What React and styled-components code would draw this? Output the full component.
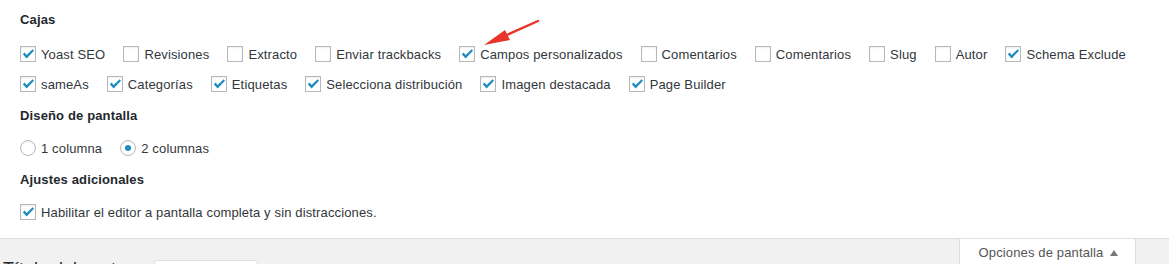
import React from "react";
import styled, { createGlobalStyle } from "styled-components";

const GlobalStyle = createGlobalStyle`
  html, body {
    margin: 0;
    padding: 0;
    background: #f1f1f1;
    overflow: hidden;
  }
  body {
    font-family: "Liberation Sans", Arial, sans-serif;
    font-size: 13px;
    letter-spacing: 0.14px;
    color: #32373c;
  }
`;

const Panel = styled.div`
  position: relative;
  background: #fff;
  padding: 8px 20px 11px;
  border-bottom: 1px solid #ddd;
`;

const Heading = styled.h5`
  margin: ${({ $first }) => ($first ? "0" : "5px 0 0")};
  font-size: 13px;
  font-weight: 700;
  line-height: 24px;
  color: #23282d;
`;

const Options = styled.div`
  display: flex;
  flex-wrap: wrap;
  column-gap: 18px;
  margin-top: ${({ $gap }) => $gap}px;
`;

const Option = styled.label`
  display: inline-flex;
  align-items: center;
  gap: 5px;
  height: 30px;
  white-space: nowrap;
  cursor: pointer;
`;

const Box = styled.span`
  box-sizing: border-box;
  flex: none;
  width: 16px;
  height: 16px;
  border: 1px solid #b4b9be;
  background: #fff;
  box-shadow: inset 0 1px 2px rgba(0, 0, 0, 0.07);
  display: flex;
  align-items: center;
  justify-content: center;
  border-radius: ${({ $round }) => ($round ? "50%" : "0")};
`;

const Dot = styled.span`
  width: 6px;
  height: 6px;
  border-radius: 50%;
  background: #1e8cbe;
`;

const Arrow = styled.svg`
  position: absolute;
  left: 0;
  top: 0;
  pointer-events: none;
`;

const Bar = styled.div`
  display: flex;
  justify-content: space-between;
  align-items: flex-start;
  padding-right: 33px;
  height: 40px;
`;

const Field = styled.div`
  display: flex;
  align-items: flex-start;
  gap: 38px;
  padding: 20px 0 0 3px;
  color: #23282d;
  font-size: 18px;
  letter-spacing: 0;
`;

const Input = styled.span`
  display: block;
  width: 102px;
  height: 24px;
  margin-top: 1px;
  background: #fff;
  border: 1px solid #ddd;
  border-radius: 3px;
`;

const Tab = styled.button`
  margin-top: -1px;
  width: 177px;
  height: 30px;
  background: #fff;
  border: 1px solid #ddd;
  border-top: none;
  font-family: inherit;
  font-size: 13px;
  letter-spacing: 0.14px;
  color: #555;
  padding: 0 0 0 2px;
  display: flex;
  align-items: center;
  justify-content: center;
  gap: 7px;
`;

const Check = () => (
  <svg width="14" height="14" viewBox="0 0 14 14">
    <path d="M1.8 7.2 L3.6 5.6 L5.6 8 L11.6 2.2 L13 3.8 L5.6 11.6 Z" fill="#1e8cbe" />
  </svg>
);

const CheckItem = ({ label, checked }) => (
  <Option>
    <Box>{checked && <Check />}</Box>
    {label}
  </Option>
);

const RadioItem = ({ label, checked }) => (
  <Option>
    <Box $round>{checked && <Dot />}</Box>
    {label}
  </Option>
);

const boxes = [
  ["Yoast SEO", true],
  ["Revisiones", false],
  ["Extracto", false],
  ["Enviar trackbacks", false],
  ["Campos personalizados", true],
  ["Comentarios", false],
  ["Comentarios", false],
  ["Slug", false],
  ["Autor", false],
  ["Schema Exclude", true],
  ["sameAs", true],
  ["Categorías", true],
  ["Etiquetas", true],
  ["Selecciona distribución", true],
  ["Imagen destacada", true],
  ["Page Builder", true],
];

export default function App() {
  return (
    <>
      <GlobalStyle />
      <Panel>
        <Heading $first>Cajas</Heading>
        <Options $gap={7}>
          {boxes.map(([label, checked], i) => (
            <CheckItem key={i} label={label} checked={checked} />
          ))}
        </Options>
        <Heading>Diseño de pantalla</Heading>
        <Options $gap={5}>
          <RadioItem label="1 columna" />
          <RadioItem label="2 columnas" checked />
        </Options>
        <Heading>Ajustes adicionales</Heading>
        <Options $gap={5}>
          <CheckItem label="Habilitar el editor a pantalla completa y sin distracciones." checked />
        </Options>
        <Arrow width="600" height="60">
          <line x1="538" y1="21" x2="502" y2="37" stroke="#e8352b" strokeWidth="2.4" strokeLinecap="round" />
          <polygon points="484,45 505,30 510,40" fill="#e8352b" />
        </Arrow>
      </Panel>
      <Bar>
        <Field>
          <span>Título del post</span>
          <Input />
        </Field>
        <Tab>
          Opciones de pantalla
          <svg width="8" height="6" viewBox="0 0 8 6">
            <path d="M0 6 L4 0 L8 6 Z" fill="#72777c" />
          </svg>
        </Tab>
      </Bar>
    </>
  );
}
